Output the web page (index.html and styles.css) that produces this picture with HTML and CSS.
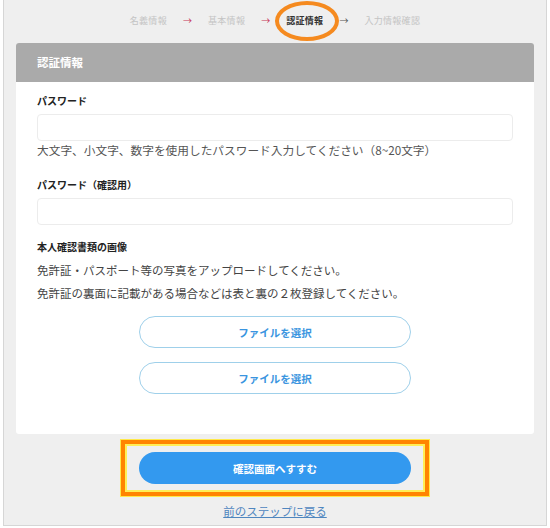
FILE: index.html
```html
<!DOCTYPE html>
<html lang="ja">
<head>
    <meta charset="UTF-8">
    <meta name="viewport" content="width=device-width, initial-scale=1.0">
    <title>認証情報</title>
    <link rel="stylesheet" href="styles.css">
</head>
<body>
    <div class="frame">
        <nav class="steps">
            <span class="step">名義情報</span>
            <span class="arrow">→</span>
            <span class="step">基本情報</span>
            <span class="arrow">→</span>
            <span class="step current">認証情報</span>
            <span class="arrow dark">→</span>
            <span class="step">入力情報確認</span>
            <!-- annotation circle -->
            <span class="mark-circle"></span>
        </nav>

        <div class="card">
            <div class="card-head">認証情報</div>
            <div class="card-body">
                <div class="label first">パスワード</div>
                <input class="field" type="password">
                <p class="hint">大文字、小文字、数字を使用したパスワード入力してください（8~20文字）</p>

                <div class="label">パスワード（確認用）</div>
                <input class="field" type="password">

                <div class="label upload-label">本人確認書類の画像</div>
                <p class="note">免許証・パスポート等の写真をアップロードしてください。<br>免許証の裏面に記載がある場合などは表と裏の２枚登録してください。</p>

                <div class="files">
                    <button class="file-button">ファイルを選択</button>
                    <button class="file-button">ファイルを選択</button>
                </div>
            </div>
        </div>

        <div class="actions">
            <div class="mark-box">
                <button class="submit">確認画面へすすむ</button>
            </div>
            <a class="back" href="#">前のステップに戻る</a>
        </div>
    </div>
</body>
</html>
```

FILE: styles.css
```css
body {
    margin: 0;
    font-family: "Noto Sans CJK JP", "Noto Sans", sans-serif;
    background: #fff;
    color: #333;
}

.frame {
    margin: 0 3px;
    height: 526px;
    background: #efefef;
    border: 1px solid #d6d6d6;
    border-top: none;
    box-sizing: border-box;
}

/* step navigation */
.steps {
    position: relative;
    height: 43px;
    display: flex;
    align-items: center;
    justify-content: center;
    gap: 16px;
    font-size: 9px;
    padding-bottom: 2px;
    box-sizing: border-box;
}

.step {
    color: #c4c4c4;
    letter-spacing: 0.3px;
}

.step.current {
    color: #333;
    font-weight: bold;
}

.arrow {
    color: #c8385a;
    font-size: 9px;
}

.arrow.dark {
    color: #555;
}

.mark-circle {
    position: absolute;
    left: 271px;
    top: 1px;
    width: 56px;
    height: 32px;
    border: 4px solid #f58a1f;
    border-radius: 50%;
}

/* card */
.card {
    margin: 0 12px;
    background: #fff;
    border-radius: 3px;
}

.card-head {
    height: 39px;
    line-height: 39px;
    padding-left: 21px;
    background: #aaaaaa;
    color: #fff;
    font-weight: bold;
    font-size: 11.5px;
    border-radius: 3px 3px 0 0;
}

.card-body {
    padding: 11px 21px 40px;
}

.label {
    font-size: 10px;
    font-weight: bold;
    line-height: 16px;
    margin-top: 18px;
    color: #222;
}

.label.first {
    margin-top: 0;
}

.label.upload-label {
    margin-top: 14px;
}

.field {
    display: block;
    width: 100%;
    height: 27px;
    margin-top: 5px;
    box-sizing: border-box;
    border: 1px solid #ececec;
    border-radius: 4px;
    background: #fff;
}

.hint {
    margin: 0;
    font-size: 11.7px;
    line-height: 18px;
    color: #555;
}

.note {
    margin: 4px 0 0;
    font-size: 11.5px;
    line-height: 23px;
    color: #444;
}

.files {
    display: flex;
    flex-direction: column;
    align-items: center;
    gap: 14px;
    margin-top: 11px;
}

.file-button {
    width: 272px;
    height: 32px;
    background: #fff;
    border: 1px solid #9fd0ea;
    border-radius: 16px;
    color: #3a95e0;
    font-family: inherit;
    font-size: 10.5px;
    font-weight: bold;
    cursor: pointer;
}

/* bottom actions */
.actions {
    display: flex;
    flex-direction: column;
    align-items: center;
    padding-top: 6px;
}

.mark-box {
    width: 308px;
    height: 56px;
    box-sizing: border-box;
    border: 4px solid #ff8400;
    box-shadow: 0 0 0 1px #ffe94a, inset 0 0 0 2px #ffee55;
    display: flex;
    align-items: center;
    justify-content: center;
}

.submit {
    width: 272px;
    height: 32px;
    border: none;
    border-radius: 16px;
    background: #3399ef;
    color: #fff;
    font-family: inherit;
    font-size: 10.5px;
    font-weight: bold;
    cursor: pointer;
}

.back {
    margin-top: 6px;
    font-size: 11.5px;
    line-height: 18px;
    color: #4f86bf;
    text-decoration: underline;
}
```
